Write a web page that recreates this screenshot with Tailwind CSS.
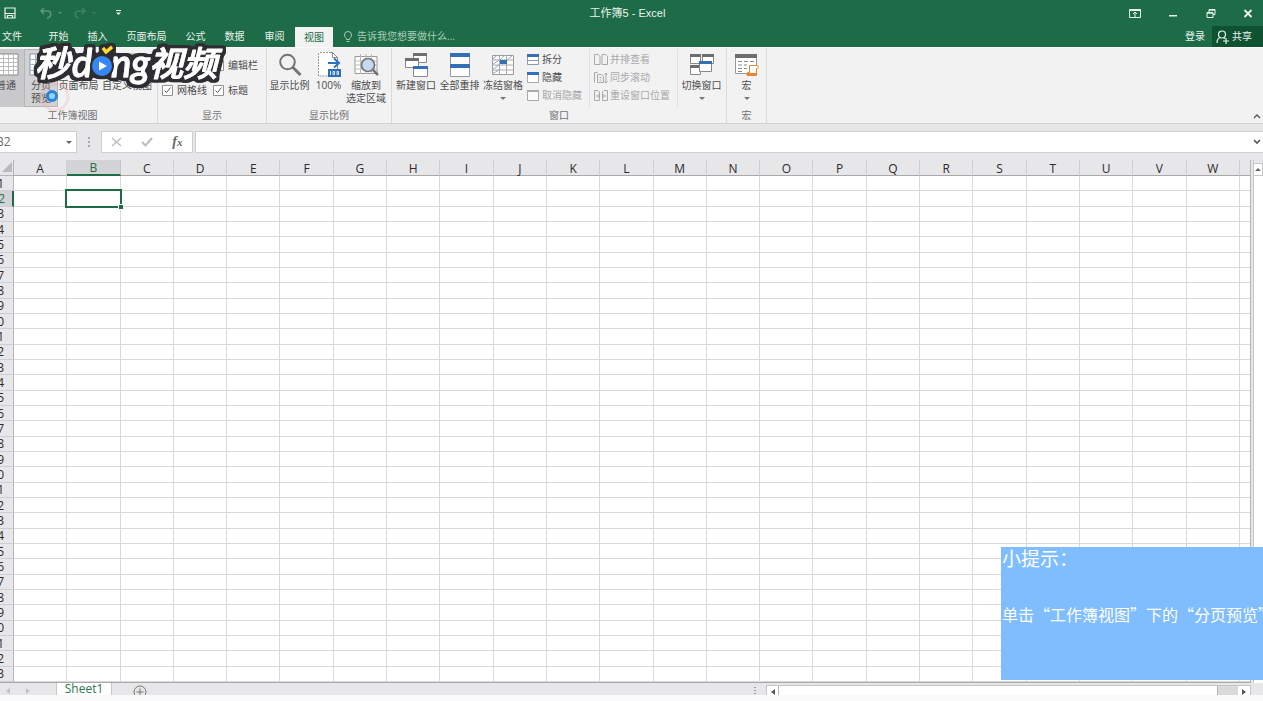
<!DOCTYPE html>
<html lang="zh-CN">
<head>
<meta charset="utf-8">
<meta name="viewport" content="width=device-width, initial-scale=1">
<title>工作簿5 - Excel</title>
<script src="https://cdn.jsdelivr.net/npm/@tailwindcss/browser@4"></script>
</head>
<body class="relative flex h-screen flex-col overflow-hidden bg-[#e7e6e8] font-['Open_Sans','Noto_Sans_CJK_SC',sans-serif] text-[10px] leading-[13px] text-[#4c4c4e]">

<!-- Title bar -->
<header class="shrink-0 bg-[#1e6b47] text-[#eaf3ee]">
  <div class="grid h-[26px] grid-cols-[1fr_auto_1fr] items-center pr-2">
    <div class="flex items-center pl-1">
      <button aria-label="保存" class="mr-[23px]"><svg width="12" height="12" viewBox="0 0 12 12" fill="none" stroke="currentColor" stroke-width="1.200"><path d="M1 1h10v10H1zM1 6.500h10M3.500 11V8.500h5V11"/></svg></button>
      <button aria-label="撤消" class="text-[#5d967a]"><svg width="14" height="12" viewBox="0 0 14 12" fill="none" stroke="currentColor" stroke-width="1.600"><path d="M5 1 2 4l3 3M2 4h6c5 0 5 6 0 7"/></svg></button>
      <span class="mr-[11px] ml-[5px] border-x-2 border-t-2 border-x-transparent border-t-[#5d967a]"></span>
      <button aria-label="恢复" class="text-[#3f8160]"><svg width="14" height="12" viewBox="0 0 14 12" fill="none" stroke="currentColor" stroke-width="1.600"><path d="m9 1 3 3-3 3M12 4H6C1 4 1 10 6 11"/></svg></button>
      <span class="mr-5 ml-[5px] border-x-2 border-t-2 border-x-transparent border-t-[#3f8160]"></span>
      <button aria-label="自定义快速访问工具栏"><svg width="5" height="6" viewBox="0 0 5 6" fill="currentColor"><path d="M0 0h5v1H0zM0 2.500h5L2.500 5z"/></svg></button>
    </div>
    <h1 class="font-['Liberation_Sans','Noto_Sans_CJK_SC',sans-serif] text-[11px]">工作簿5 - Excel</h1>
    <div class="flex items-center justify-end gap-[26px] pr-[2px]">
      <button aria-label="功能区显示选项"><svg width="12" height="9" viewBox="0 0 12 9" fill="none" stroke="currentColor"><path d="M.5.500h11v8H.5zM.5 1.500h11M6 8V3.500M4 5l2-2 2 2"/></svg></button>
      <button aria-label="最小化"><svg width="12" height="9" viewBox="0 0 12 9"><path d="M2 6h8v1.500H2z" fill="currentColor"/></svg></button>
      <button aria-label="还原"><svg width="12" height="9" viewBox="0 0 12 9" fill="none" stroke="currentColor"><path d="M2 3.500h6v5H2zM4 3V.5h6v5H8M4 1.200h6M2 4.200h6"/></svg></button>
      <button aria-label="关闭"><svg width="10" height="9" viewBox="0 0 10 9" fill="none" stroke="currentColor" stroke-width="1.800"><path d="m1.500 1 7 7M8.500 1l-7 7"/></svg></button>
    </div>
  </div>

  <!-- Ribbon tabs -->
  <nav class="flex h-[21px] items-stretch">
    <button class="mr-[17px] pl-0.5">文件</button>
    <button class="w-[39px]">开始</button>
    <button class="w-[39px]">插入</button>
    <button class="w-[59px]">页面布局</button>
    <button class="w-[39px]">公式</button>
    <button class="w-[39px]">数据</button>
    <button class="w-[41px]">审阅</button>
    <button class="mt-px w-[38px] bg-[#f2f2f3] text-[#1e6b47]">视图</button>
    <label class="ml-[10px] flex items-center gap-1 text-[#a9cdb9]">
      <svg width="10" height="12" viewBox="0 0 10 12" fill="none" stroke="currentColor"><path d="M3.500 8.500C3.500 7 1.500 6 1.500 4a3.500 3.500 0 0 1 7 0c0 2-2 3-2 4.500zM3.500 10.500h3"/></svg>
      <input type="text" placeholder="告诉我您想要做什么..." aria-label="告诉我您想要做什么" class="w-32 bg-transparent outline-none placeholder:text-[#a9cdb9]">
    </label>
    <button class="mr-[7px] ml-auto">登录</button>
    <button class="flex w-[51px] items-center gap-[3px] bg-[#0e5231] pl-1">
      <svg width="13" height="14" viewBox="0 0 13 14" fill="none" stroke="currentColor" stroke-width="1.200"><circle cx="6" cy="4.500" r="3.500"/><path d="M1 13c0-3 1.500-5 3.500-5.500M7.500 7.500l1.500 1M7 11h6M10 8v6"/></svg>共享</button>
  </nav>
</header>

<!-- Ribbon -->
<section class="flex h-[77px] shrink-0 border-t border-b border-t-[#fafafa] border-b-[#d2d1d3] bg-[#f2f2f3]" aria-label="视图">
  <div class="-ml-3 flex w-[170px] shrink-0 flex-col border-r border-[#dadadb]">
    <div class="mb-[2px] flex h-[59px] pt-px">
      <button class="flex w-9 flex-col items-center bg-[#c9c8ca]">
        <svg class="mt-1 mb-[2px] shrink-0" width="26" height="24" viewBox="0 0 26 24"><path d="M1 1h24v21H1z" fill="#fff" stroke="#888"/><path d="M5.500 1v21M10.500 1v21M15.500 1v21M20.500 1v21M1 5.500h24M1 9.500h24M1 13.500h24M1 17.500h24" stroke="#bbb" fill="none"/></svg>普通</button>
      <button class="flex w-[34px] flex-col items-center border border-[#b5b4b6] bg-[#d2d1d3]">
        <svg class="mt-[3px] mb-[2px] shrink-0" width="24" height="24" viewBox="0 0 24 24"><path d="M1 1h22v21H1z" fill="#fff" stroke="#8296b3"/><path d="M6.500 1v21M11.500 1v21M17.500 1v21M1 6.500h22M1 11.500h22M1 17.500h22" stroke="#9db5d5" fill="none"/></svg><span>分页<br>预览</span></button>
      <button class="flex w-[41px] flex-col items-center">
        <svg class="mt-1 mb-[2px] shrink-0" width="24" height="24" viewBox="0 0 24 24"><path d="M4 1h16v22H4z" fill="#fff" stroke="#999"/></svg><span class="whitespace-nowrap">页面布局</span></button>
      <button class="flex w-14 flex-col items-center">
        <svg class="mt-1 mb-[2px] shrink-0" width="24" height="24" viewBox="0 0 24 24"><path d="M1 1h20v21H1z" fill="#fff" stroke="#999"/><path d="M1 5h20" stroke="#999"/></svg><span class="whitespace-nowrap">自定义视图</span></button>
    </div>
    <h2 class="text-center text-[#717173]">工作簿视图</h2>
  </div>

  <div class="flex w-[109px] shrink-0 flex-col border-r border-[#dadadb]">
    <div class="mb-[2px] grid h-[59px] grid-cols-[51px_auto] content-start gap-y-3 pt-[11px] pl-1">
      <span></span>
      <label class="flex items-center gap-1"><input type="checkbox" checked class="peer sr-only"><svg width="11" height="11" viewBox="0 0 11 11" fill="#fff" stroke="#929294"><path d="M.5.500h10v10H.5z"/><path d="m2.500 5.500 2 2 4-5" fill="none" stroke="#555"/></svg>编辑栏</label>
      <label class="flex items-center gap-1"><input type="checkbox" checked class="peer sr-only"><svg width="11" height="11" viewBox="0 0 11 11" fill="#fff" stroke="#929294"><path d="M.5.500h10v10H.5z"/><path d="m2.500 5.500 2 2 4-5" fill="none" stroke="#555"/></svg>网格线</label>
      <label class="flex items-center gap-1"><input type="checkbox" checked class="peer sr-only"><svg width="11" height="11" viewBox="0 0 11 11" fill="#fff" stroke="#929294"><path d="M.5.500h10v10H.5z"/><path d="m2.500 5.500 2 2 4-5" fill="none" stroke="#555"/></svg>标题</label>
    </div>
    <h2 class="text-center text-[#717173]">显示</h2>
  </div>

  <div class="flex w-[125px] shrink-0 flex-col border-r border-[#dadadb]">
    <div class="mb-[2px] flex h-[59px] pt-px pl-[2px]">
      <button class="flex w-[41px] flex-col items-center">
        <svg class="mt-1 mb-[2px] shrink-0" width="24" height="24" viewBox="0 0 24 24" fill="none" stroke="#747476"><circle cx="9.500" cy="9" r="7.300" stroke-width="2"/><path d="m14.500 14 8 8" stroke-width="3"/></svg><span class="whitespace-nowrap">显示比例</span></button>
      <button class="flex w-[37px] flex-col items-center">
        <svg class="mt-[2px] mb-[2px] shrink-0" width="24" height="26" viewBox="0 0 24 26" fill="none"><path d="M1.500 1H16l5 5v19H1.500z" fill="#fff"/><path d="M14 1.500H2M1.500 2v23h9" stroke="#999" stroke-dasharray="2 1"/><path d="M14 1.500h1.500l5 5V24M15.500 1.500v5h5" stroke="#888"/><path d="M11 12h10M17 7.500l5 4.500-5 4.500" stroke="#2e73bd" stroke-width="2"/><path d="M11 18h13v8H11z" fill="#2e6fb5"/><path d="M13.500 20v4M16 20.500h1.500v3H16zM20 20.500h1.500v3H20z" stroke="#dce9f7"/></svg>100%</button>
      <button class="flex w-[38px] flex-col items-center">
        <svg class="mt-1 mb-[2px] shrink-0" width="25" height="24" viewBox="0 0 25 24" fill="none"><path d="M1 3.500h22v17H1z" fill="#fff" stroke="#999"/><path d="M1 8h22M1 12h22M1 16h22M6.500 1v20M12 1v20M17.500 1v20" stroke="#bbb"/><circle cx="14" cy="12" r="6.500" fill="#c5daf0" stroke="#747476" stroke-width="1.700"/><path d="m19 17 5 5" stroke="#747476" stroke-width="2.500"/></svg><span class="whitespace-nowrap">缩放到<br>选定区域</span></button>
    </div>
    <h2 class="text-center text-[#717173]">显示比例</h2>
  </div>

  <div class="flex w-[335px] shrink-0 flex-col border-r border-[#dadadb]">
    <div class="mb-[2px] flex h-[59px] pt-px pl-[2px]">
      <button class="flex w-11 flex-col items-center">
        <svg class="mt-[3px] mb-[2px] shrink-0" width="24" height="25" viewBox="0 0 24 25" fill="#fff"><path d="M9.500 1.500h13v9h-13z" stroke="#888"/><path d="M9 1h14v3H9z" fill="#6d6d6f"/><path d="M1.500 6.500h13v9h-13z" stroke="#888"/><path d="M1 6h14v3H1z" fill="#6d6d6f"/><path d="M9.500 14.500h14v10h-14z" stroke="#888"/><path d="M9 14h15v3H9z" fill="#3470b5"/></svg><span class="whitespace-nowrap">新建窗口</span></button>
      <button class="flex w-[43px] flex-col items-center">
        <svg class="mt-1 mb-[2px] shrink-0" width="22" height="24" viewBox="0 0 22 24" fill="#fff" stroke="#999"><path d="M1.500.500h19v11h-19zM1.500 12.500h19v11h-19z"/><path d="M1 0h20v4H1zM1 11h20v4H1z" fill="#3470b5" stroke="none"/></svg><span class="whitespace-nowrap">全部重排</span></button>
      <button class="flex w-11 flex-col items-center">
        <svg class="mt-1 mb-[2px] shrink-0" width="24" height="24" viewBox="0 0 24 24" fill="none"><path d="M1.500 2.500h21v19h-21z" fill="#fff" stroke="#999"/><path d="M1 7h22M1 12h22M1 17h22M8.500 2v20M15.500 2v20" stroke="#aaa"/><path d="m1 7 5-5M1 12l7-5M1 17l7-5M1 21l7-4M9 7l5-5M16 7l6-5" stroke="#91abc9"/><path d="M9 7h7v4H9z" fill="#3470b5"/></svg><span class="whitespace-nowrap">冻结窗格</span><span class="mt-[5px] border-x-[3px] border-t-[3px] border-x-transparent border-t-[#777]"></span></button>
      <div class="flex w-[65px] flex-col gap-[5px] border-r border-[#e0e0e1] pt-1 pl-[2px]">
        <button class="flex items-center gap-[3px]"><svg width="12" height="12" viewBox="0 0 12 12" fill="#fff" stroke="#8a9ab0"><path d="M.5.500h11v10H.5zM.5 6.500h11"/><path d="M0 0h12v3H0z" fill="#3470b5" stroke="none"/></svg>拆分</button>
        <button class="flex items-center gap-[3px]"><svg width="12" height="12" viewBox="0 0 12 12" fill="#fff" stroke="#aaa"><path d="M.5.500h11v10H.5z"/><path d="M0 0h12v3H0z" fill="#3470b5" stroke="none"/></svg>隐藏</button>
        <button disabled class="flex items-center gap-[3px] whitespace-nowrap text-[#a8a8aa]"><svg width="12" height="12" viewBox="0 0 12 12" fill="#fafafa" stroke="#aaa"><path d="M.5.500h11v10H.5z"/><path d="M0 0h12v2H0z" fill="#aaa" stroke="none"/></svg>取消隐藏</button>
      </div>
      <div class="flex w-[87px] flex-col gap-[5px] pt-1 pl-[4px] text-[#a8a8aa]">
        <button disabled class="flex items-center gap-[2px]"><svg width="14" height="12" viewBox="0 0 14 12" fill="none" stroke="currentColor"><path d="M.5.500H4l2 2v8H.5zM8 .5h3.500l2 2v8H8z"/></svg>并排查看</button>
        <button disabled class="flex items-center gap-[2px]"><svg width="14" height="12" viewBox="0 0 14 12" fill="none" stroke="currentColor"><path d="M.5 10.500V.5h3M3.500 2.500h4l2 2v6h-6zM5.500 5.500h2M5.500 8h2M12 1v10M10.500 2.500 12 1l1.500 1.500M10.500 9.500 12 11l1.500-1.500"/></svg>同步滚动</button>
        <button disabled class="flex items-center gap-[2px] whitespace-nowrap"><svg width="14" height="12" viewBox="0 0 14 12" fill="none" stroke="currentColor"><path d="M4 .5H.5v10h5V2zM10 .5h3.500v10h-5V2zM2 6h3.500M4 4.500 5.500 6 4 7.500M12 6H8.500M10 4.500 8.500 6 10 7.500"/></svg>重设窗口位置</button>
      </div>
      <button class="flex w-12 flex-col items-center border-l border-[#e0e0e1]">
        <svg class="mt-1 mb-[2px] shrink-0" width="24" height="24" viewBox="0 0 24 24" fill="#fff" stroke="#888"><path d="M.5 2.500h10v8H.5zM12.500 2.500h11v8h-11zM.5 13.500h10v8H.5z"/><path d="M0 1h11v3H0zM12 1h12v3H12zM0 12h10v3H0z" fill="#6d6d6f" stroke="none"/><path d="M9.500 9.500h12v9h-12z"/><path d="M9 8h13v3H9z" fill="#3470b5" stroke="none"/></svg><span class="whitespace-nowrap">切换窗口</span><span class="mt-[5px] border-x-[3px] border-t-[3px] border-x-transparent border-t-[#777]"></span></button>
    </div>
    <h2 class="text-center text-[#717173]">窗口</h2>
  </div>

  <div class="flex w-10 shrink-0 flex-col border-r border-[#dadadb]">
    <button class="mb-[2px] flex h-[59px] flex-col items-center pt-px">
      <svg class="mt-1 mb-[2px] shrink-0" width="25" height="24" viewBox="0 0 25 24" fill="none"><path d="M1.500 1.500h21v19h-21z" fill="#fff" stroke="#999"/><path d="M1 1h22v4H1z" fill="#6d6d6f"/><path d="M4 8.500h4M10 8.500h4M16 8.500h4M4 12h4M10 12h3M4 15.500h4M10 15.500h3M4 18.500h4" stroke="#888"/><path d="M15.500 12.500h8c1 0 1 3-1 3v7h-9v-3h2z" fill="#fff" stroke="#e8862e"/><path d="M12 20h10v3H13z" fill="#e8862e"/></svg><span>宏</span><span class="mt-[5px] border-x-[3px] border-t-[3px] border-x-transparent border-t-[#777]"></span></button>
    <h2 class="text-center text-[#717173]">宏</h2>
  </div>
  <button aria-label="折叠功能区" class="mt-auto mr-[2px] mb-1 ml-auto"><svg width="8" height="6" viewBox="0 0 8 6" fill="none" stroke="#555" stroke-width="1.300"><path d="m1 5 3-3 3 3"/></svg></button>
</section>

<!-- Formula bar -->
<section class="flex h-9 shrink-0 items-start pt-[7px]">
  <div class="-ml-2 flex h-[22px] w-[85px] shrink-0 items-center justify-between border border-[#cfced0] bg-white pr-1">
    <input type="text" value="B2" aria-label="名称框" class="w-12 bg-transparent pl-[3px] text-xs text-[#6a6a6c] outline-none">
    <span class="border-x-[3px] border-t-[3px] border-x-transparent border-t-[#666]"></span>
  </div>
  <svg class="mx-[11px] mt-[5px] shrink-0" width="2" height="12" viewBox="0 0 2 12" fill="#aaa"><path d="M0 1h2v2H0zM0 5h2v2H0zM0 9h2v2H0z"/></svg>
  <div class="flex h-[22px] w-[92px] shrink-0 items-center justify-around border border-[#cfced0] bg-white">
    <button aria-label="取消"><svg width="11" height="10" viewBox="0 0 11 10" fill="none" stroke="#bdbdbf" stroke-width="1.500"><path d="m1 1 9 8M10 1 1 9"/></svg></button>
    <button aria-label="输入"><svg width="12" height="10" viewBox="0 0 12 10" fill="none" stroke="#bdbdbf" stroke-width="2"><path d="m1 5 3.500 3.500L11 1"/></svg></button>
    <button aria-label="插入函数" class="font-['Liberation_Serif',serif] text-sm font-bold text-[#666] italic">f<span class="text-[11px]">x</span></button>
  </div>
  <div class="ml-[2px] flex h-[22px] min-w-0 flex-1 items-center border-y border-l border-[#cfced0] bg-white">
    <input type="text" aria-label="编辑栏" class="min-w-0 flex-1 bg-transparent px-1 text-xs outline-none">
    <button aria-label="展开编辑栏" class="mr-[2px]"><svg width="8" height="6" viewBox="0 0 8 6" fill="none" stroke="#555" stroke-width="1.600"><path d="m1 1 3 3 3-3"/></svg></button>
  </div>
</section>

<!-- Worksheet -->
<main class="relative flex min-h-0 flex-1">
  <div class="min-w-0 flex-1 border-r border-[#b5b4b6]">
    <table class="h-full w-full table-fixed border-separate border-spacing-0 border-b border-[#a9a8aa] bg-white">
      <colgroup id="cols"><col class="w-[14px]"></colgroup>
      <thead><tr id="letters" class="h-4"></tr></thead>
      <tbody id="rows"></tbody>
    </table>
  </div>
  <div class="ml-[2px] flex w-[10px] shrink-0 flex-col border-l border-[#c5c4c6] pt-[3px]">
    <button aria-label="向上滚动" class="flex h-[13px] items-center justify-center border border-l-0 border-[#c5c4c6] bg-white"><span class="border-x-[3px] border-b-[3px] border-x-transparent border-b-[#666]"></span></button>
    <div class="flex-1 bg-white"></div>
  </div>
  <aside class="absolute right-0 bottom-[3px] h-[133px] w-[262px] overflow-hidden bg-[#80bdff] pl-px font-['Noto_Sans_CJK_SC',sans-serif] whitespace-nowrap text-white">
    <p class="text-[19px] leading-[22px]">小提示：</p>
    <p class="mt-[33px] text-base leading-6">单击“工作簿视图”下的“分页预览”</p>
  </aside>
</main>

<!-- Sheet tabs and horizontal scroll bar -->
<footer class="flex h-3 shrink-0 overflow-hidden">
  <div class="flex w-[57px] shrink-0 items-center gap-4 border-r border-[#c5c4c6] pt-1 pl-[6px]">
    <span class="border-y-[3px] border-r-4 border-y-transparent border-r-[#c3c3c5]"></span>
    <span class="border-y-[3px] border-l-4 border-y-transparent border-l-[#c3c3c5]"></span>
  </div>
  <button class="w-[55px] shrink-0 border-r border-[#c5c4c6] bg-white text-xs leading-3 text-[#2c7451]">Sheet1</button>
  <button aria-label="新工作表" class="ml-[21px] self-start pt-[2px]"><svg width="14" height="14" viewBox="0 0 14 14" fill="none" stroke="#777"><circle cx="7" cy="7" r="6"/><path d="M7 3.500v7M3.500 7h7"/></svg></button>
  <svg class="mt-1 mr-[10px] ml-auto shrink-0" width="2" height="9" viewBox="0 0 2 9" fill="#999"><path d="M0 0h2v1H0zM0 3h2v1H0zM0 6h2v1H0z"/></svg>
  <div class="mt-[2px] mr-3 flex h-[14px] w-[485px] shrink-0 border border-[#c5c4c6] bg-[#dadadb]">
    <button aria-label="向左滚动" class="flex w-3 items-center justify-center border-r border-[#b5b4b6] bg-white"><span class="border-y-[3px] border-r-4 border-y-transparent border-r-[#555]"></span></button>
    <div class="flex-1 border-r border-[#b5b4b6] bg-white"></div>
    <button aria-label="向右滚动" class="ml-5 flex w-3 items-center justify-center bg-white"><span class="border-y-[3px] border-l-4 border-y-transparent border-l-[#555]"></span></button>
  </div>
</footer>
<div class="h-[6px] shrink-0 bg-[#fafafa]"></div>

<!-- Click ripple and busy pointer -->
<svg class="pointer-events-none absolute top-[76px] left-[38px]" width="36" height="40" viewBox="0 0 36 40" fill="none">
  <circle cx="17" cy="21" r="13" stroke="#f3a5a5" stroke-opacity=".25" stroke-width="3"/>
  <circle cx="14" cy="20" r="4.500" fill="#9bd0f5" stroke="#2585d8" stroke-width="3"/>
</svg>

<!-- Video channel logo -->
<svg class="pointer-events-none absolute top-[38px] left-[28px]" width="200" height="56" viewBox="0 0 200 56" role="img" aria-label="秒dong视频">
  <defs>
    <filter id="outline" filterUnits="userSpaceOnUse" x="0" y="0" width="200" height="56">
      <feMorphology in="SourceAlpha" operator="dilate" radius="3" result="fat"/>
      <feGaussianBlur in="fat" stdDeviation="1" result="round"/>
      <feComponentTransfer in="round" result="edge"><feFuncA type="linear" slope="4" intercept="-1"/></feComponentTransfer>
      <feFlood flood-color="#2e2e30"/>
      <feComposite in2="edge" operator="in" result="dark"/>
      <feMerge><feMergeNode in="dark"/><feMergeNode in="SourceGraphic"/></feMerge>
    </filter>
  </defs>
  <g filter="url(#outline)">
    <g fill="#fff" stroke="#fff" stroke-width="1" stroke-linejoin="round" font-style="italic">
      <text x="7" y="38" font-family="Noto Sans CJK SC" font-weight="500" font-size="35">秒</text>
      <text x="121" y="38" font-family="Noto Sans CJK SC" font-weight="500" font-size="34">视频</text>
      <text x="44" y="39" font-family="Lato" font-weight="500" font-size="38">d</text>
      <text x="83" y="39" font-family="Lato" font-weight="500" font-size="38">ng</text>
    </g>
    <circle cx="74" cy="28" r="10" fill="#3487f5"/>
    <path d="m75 10 3 4 6-5" fill="none" stroke="#ffdc2e" stroke-width="3"/>
  </g>
  <circle cx="74" cy="28" r="12" fill="#2e2e30"/>
  <circle cx="74" cy="28" r="10" fill="#3487f5"/>
  <path d="M71 23.500v9l8-4.500z" fill="#fff"/>
</svg>

<script>
  const letters = 'ABCDEFGHIJKLMNOPQRSTUVW'.split('');
  const cols = document.getElementById('cols');
  letters.forEach(() => cols.append(document.createElement('col')));
  const edge = document.createElement('col');
  edge.className = 'w-[10px]';
  cols.append(edge);

  const head = document.getElementById('letters');
  head.innerHTML =
    '<th class="border-r border-b border-[#b5b4b6] bg-[#e7e6e8] p-0"><svg class="ml-auto" width="11" height="11" viewBox="0 0 11 11"><path d="M10 0v10H0z" fill="#b9b8ba"/></svg></th>' +
    letters.map(l => l === 'B'
      ? '<th scope="col" class="border-r border-b-2 border-r-[#c5c4c6] border-b-[#1e6b47] bg-[#d3d2d4] p-0 pt-px text-xs leading-[13px] font-normal text-[#2c6b4d]">B</th>'
      : '<th scope="col" class="border-r border-b border-r-[#cfced0] border-b-[#a9a8aa] bg-[#e7e6e8] p-0 pt-[2px] text-xs leading-[13px] font-normal text-[#2b2b2d]">' + l + '</th>').join('') +
    '<th class="border-b border-[#a9a8aa] bg-[#e7e6e8] p-0"></th>';

  const body = document.getElementById('rows');
  for (let r = 1; r <= 33; r++) {
    const tr = document.createElement('tr');
    let html = r === 2
      ? '<th scope="row" class="border-r-2 border-b border-r-[#1e6b47] border-b-[#cfced0] bg-[#d3d2d4] p-0 text-xs leading-[13px] font-normal text-[#2c6b4d]"><div class="flex justify-end pr-[7px]">2</div></th>'
      : '<th scope="row" class="border-r border-b border-r-[#b5b4b6] border-b-[#cfced0] bg-[#e7e6e8] p-0 text-xs leading-[13px] font-normal text-[#2b2b2d]"><div class="flex justify-end pr-[9px]">' + r + '</div></th>';
    letters.forEach(l => {
      html += r === 2 && l === 'B'
        ? '<td class="relative border-r border-b border-[#d9d9da] p-0"><span class="absolute -inset-[2px] border-2 border-[#1e6b47]"></span><span class="absolute -right-[3px] -bottom-[3px] size-1 bg-[#1e6b47] outline outline-white"></span></td>'
        : '<td class="border-r border-b border-[#d9d9da] p-0"></td>';
    });
    tr.innerHTML = html + '<td class="border-b border-[#d9d9da] p-0"></td>';
    body.append(tr);
  }
</script>
</body>
</html>
